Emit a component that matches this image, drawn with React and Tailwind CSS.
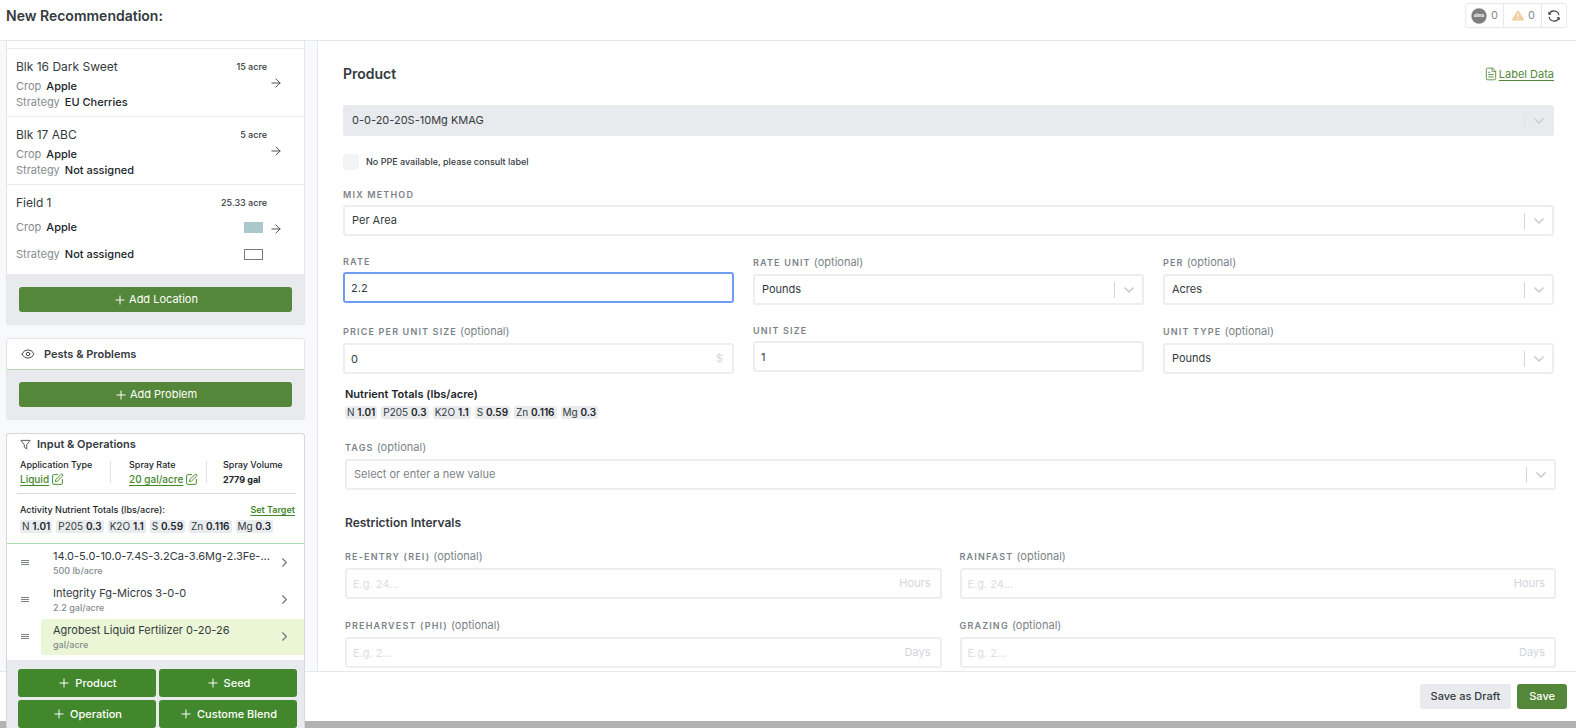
import { useState } from "react";
import { ArrowRight, ChevronDown, ChevronRight, Eye, FileText, Plus, SquarePen } from "lucide-react";

const locations = [
  { name: "Blk 16 Dark Sweet", size: "15 acre", crop: "Apple", strategy: "EU Cherries" },
  { name: "Blk 17 ABC", size: "5 acre", crop: "Apple", strategy: "Not assigned" },
  { name: "Field 1", size: "25.33 acre", crop: "Apple", strategy: "Not assigned", swatches: true },
];

const nutrients = [
  ["N", "1.01"],
  ["P205", "0.3"],
  ["K2O", "1.1"],
  ["S", "0.59"],
  ["Zn", "0.116"],
  ["Mg", "0.3"],
];

const inputs = [
  { name: "14.0-5.0-10.0-7.4S-3.2Ca-3.6Mg-2.3Fe-...", rate: "500 lb/acre" },
  { name: "Integrity Fg-Micros 3-0-0", rate: "2.2 gal/acre" },
  { name: "Agrobest Liquid Fertilizer 0-20-26", rate: "gal/acre", active: true },
];

function SyncIcon() {
  return (
    <svg viewBox="0 0 12 12" className="size-3" fill="none" stroke="#343a40" strokeWidth="1.1" aria-hidden="true">
      <path d="M1.4 3.8A5 5 0 0 1 10.900 5.200" />
      <path d="M10.600 8.200A5 5 0 0 1 1.100 6.800" />
      <path d="M.3 1.500v3.200h3.200z" fill="#343a40" stroke="none" />
      <path d="M11.700 10.500V7.300H8.500z" fill="#343a40" stroke="none" />
    </svg>
  );
}

function WarningIcon() {
  return (
    <svg viewBox="0 0 12 11" className="h-[11px] w-3" aria-hidden="true">
      <path
        d="M6 .4c.4 0 .7.2.9.5l4.800 8.200c.4.7-.1 1.500-.9 1.500H1.200C.4 10.600-.1 9.800.3 9.100L5.100.9C5.300.6 5.600.4 6 .4z"
        fill="#f3cda0"
      />
      <path d="M6 3.600v3.200" stroke="#fff" strokeWidth="1.200" />
      <circle cx="6" cy="8.500" r=".8" fill="#fff" />
    </svg>
  );
}

function FunnelIcon() {
  return (
    <svg viewBox="0 0 12 12" className="size-[11px]" fill="none" stroke="#495057" strokeLinejoin="round" aria-hidden="true">
      <path d="M1 1.500h10L7.300 6.200v4.600L4.700 9V6.200z" />
    </svg>
  );
}

function GripIcon() {
  return (
    <svg viewBox="0 0 10 10" className="size-[10px]" stroke="#7c8388" strokeWidth="1" aria-hidden="true">
      <path d="M1 2.500h8M1 4.500h8M1 6.500h8" />
    </svg>
  );
}

function Chips() {
  return (
    <ul className="flex gap-1 text-[10px] leading-[13px] text-[#343a40]">
      {nutrients.map(([symbol, amount]) => (
        <li key={symbol} className="rounded-xs bg-[#e9ecef] px-[2px] whitespace-nowrap">
          {symbol} <b className="font-semibold text-[#212529]">{amount}</b>
        </li>
      ))}
    </ul>
  );
}

function GreenButton({ children, className }) {
  return (
    <button
      type="button"
      className={`flex items-center justify-center rounded-[3px] text-[11px] text-white ${className}`}
    >
      <Plus className="size-[14px]" strokeWidth={1.700} />
      {children}
    </button>
  );
}

function Field({ id, label, optional, children }) {
  return (
    <div>
      <label
        htmlFor={id}
        className={`mb-[3px] block text-[9px] font-semibold tracking-[0.13em] text-[#7c8388] uppercase ${optional ? "leading-4" : "leading-[14px]"}`}
      >
        {label}
        {optional && (
          <span className="text-[11px] leading-3 font-normal tracking-normal normal-case"> (optional)</span>
        )}
      </label>
      {children}
    </div>
  );
}

function Select({ id, value, disabled, muted, ariaLabel }) {
  return (
    <div className="relative">
      <select
        id={id}
        disabled={disabled}
        aria-label={ariaLabel}
        className={`block h-[31px] w-full appearance-none rounded-[3px] border-2 pr-11 pl-[7px] text-[11px] opacity-100 outline-none ${disabled ? "border-[#e9eaee] bg-[#e9eaee]" : "border-[#eeeef1] bg-white"} ${muted ? "text-[#7c8388]" : "text-[#343a40]"}`}
      >
        <option>{value}</option>
      </select>
      <div className="pointer-events-none absolute inset-y-0 right-0 flex items-center">
        <span className={`h-4 w-px ${disabled ? "bg-[#e1e2e6]" : "bg-[#d3d4d8]"}`} />
        <ChevronDown className="mr-[7px] ml-[6px] size-4 text-[#cccccc]" strokeWidth={2.500} />
      </div>
    </div>
  );
}

function TextInput({ id, value, placeholder, unit, active }) {
  const [text, setText] = useState(value ?? "");
  return (
    <div className="relative">
      <input
        id={id}
        value={text}
        placeholder={placeholder}
        onChange={(event) => setText(event.target.value)}
        className={`block h-[31px] w-full rounded-[3px] border-2 bg-white px-[6px] text-[11px] text-[#343a40] outline-none placeholder:text-[#dcdde3] ${active ? "border-[#6f9df1]" : "border-[#eeeef1]"}`}
      />
      {unit && (
        <span className="pointer-events-none absolute inset-y-0 right-[11px] flex items-center text-[11px] text-[#d3d5dd]">
          {unit}
        </span>
      )}
    </div>
  );
}

function LocationRow({ name, size, crop, strategy, swatches }) {
  return (
    <li className="flex border-t border-[#e9eaee] pt-[10px] pr-[21px] pb-[6px] pl-[9px] text-[11px]">
      <div className="grow">
        <h3 className="text-[12px] leading-4 text-[#343a40]">{name}</h3>
        <dl className={`mt-[3px] ${swatches ? "leading-[27px]" : "leading-4"}`}>
          <div className="flex gap-[5px]">
            <dt className="text-[#868b90]">Crop</dt>
            <dd className="font-medium text-[#212529]">{crop}</dd>
          </div>
          <div className="flex gap-[5px]">
            <dt className="text-[#868b90]">Strategy</dt>
            <dd className="font-medium text-[#212529]">{strategy}</dd>
          </div>
        </dl>
      </div>
      <div className="flex flex-col items-end text-[9px] font-medium">
        <span className="leading-4 text-[#343a40]">{size}</span>
        {swatches && (
          <div className="mt-[11px] mr-1 flex flex-col gap-4">
            <span className="h-[11px] w-[19px] bg-[#a9c8ca]" />
            <span className="h-[11px] w-[19px] border border-[#777b80]" />
          </div>
        )}
      </div>
      <button
        type="button"
        aria-label={`Open ${name}`}
        className={`ml-[2px] flex self-start ${swatches ? "mt-[27px]" : "mt-[17px]"}`}
      >
        <ArrowRight className="size-[14px] text-[#495057]" strokeWidth={1.700} />
      </button>
    </li>
  );
}

function EditLink({ href, children }) {
  return (
    <a href={href} className="flex items-center gap-[2px] text-[10px] font-medium text-[#43872c]">
      <span className="underline underline-offset-2">{children}</span>
      <SquarePen className="size-[13px]" strokeWidth={1.800} />
    </a>
  );
}

function Sidebar() {
  return (
    <aside className="z-10 flex w-[318px] shrink-0 flex-col border-r border-[#e7e8eb] bg-[#f8f9fb] pr-3 pl-[6px]">
      <section className="shrink-0 rounded-b-[3px] border border-t-0 border-[#e5e6ea] bg-white pt-[7px]">
        <ul>
          {locations.map((location) => (
            <LocationRow key={location.name} {...location} />
          ))}
        </ul>
        <div className="bg-[#e9eaee] px-3 pt-[13px] pb-3">
          <GreenButton className="h-[25px] w-full gap-[2px] bg-[#54873a]">Add Location</GreenButton>
        </div>
      </section>

      <section className="mt-[13px] shrink-0 rounded-[3px] border border-[#e5e6ea] bg-white">
        <h2 className="flex h-[31px] items-center gap-[9px] border-b border-[#b5d8b0] pl-[14px] text-[11px] font-semibold text-[#343a40]">
          <Eye className="size-[14px]" strokeWidth={1.600} />
          Pests &amp; Problems
        </h2>
        <div className="bg-[#e9eaee] p-3">
          <GreenButton className="h-[25px] w-full gap-[2px] bg-[#54873a]">Add Problem</GreenButton>
        </div>
      </section>

      <section className="mt-[13px] shrink-0 rounded-t-[3px] border border-b-0 border-[#d5d8dc] bg-white">
        <h2 className="flex items-center gap-[6px] pt-[2px] pl-[13px] text-[11px] leading-4 font-semibold text-[#343a40]">
          <FunnelIcon />
          Input &amp; Operations
        </h2>
        <div className="mr-2 ml-[10px] flex border-b border-[#d5d8dc] pt-[5px] pb-[6px] pl-[3px] text-[9px] leading-[15px] font-medium text-[#212529]">
          <div className="w-[90px]">
            <div>Application Type</div>
            <EditLink href="#application-type">Liquid</EditLink>
          </div>
          <span className="my-1 mr-[18px] w-px bg-[#dee2e6]" />
          <div className="w-[77px]">
            <div>Spray Rate</div>
            <EditLink href="#spray-rate">20 gal/acre</EditLink>
          </div>
          <span className="my-1 mr-4 w-px bg-[#dee2e6]" />
          <div>
            <div>Spray Volume</div>
            <div className="font-bold">2779 gal</div>
          </div>
        </div>
        <div className="flex justify-between pt-2 pr-[9px] pl-[13px] text-[9px] leading-4 font-medium text-[#212529]">
          <span>Activity Nutrient Totals (lbs/acre):</span>
          <a href="#set-target" className="font-semibold text-[#43872c] underline underline-offset-2">
            Set Target
          </a>
        </div>
        <div className="border-b border-[#a9dcaa] pt-[2px] pb-[10px] pl-[13px]">
          <Chips />
        </div>
        <ul className="pb-[5px]">
          {inputs.map(({ name, rate, active }) => (
            <li key={name} className="flex h-[37px] items-center pl-[13px]">
              <button type="button" aria-label={`Reorder ${name}`}>
                <GripIcon />
              </button>
              <a
                href="#input"
                className={`ml-[11px] flex h-9 min-w-0 grow items-center justify-between rounded-l-[3px] px-3 ${active ? "bg-[#eaf6d5]" : ""}`}
              >
                <span className="flex flex-col whitespace-nowrap">
                  <span className="text-[11px] leading-4 text-[#343a40]">{name}</span>
                  <span className="text-[9px] leading-[14px] font-medium text-[#868b90]">{rate}</span>
                </span>
                <ChevronRight className="size-[15px] shrink-0 text-[#6c757d]" strokeWidth={1.800} />
              </a>
            </li>
          ))}
        </ul>
        <div className="grid grid-cols-2 gap-[3px] bg-[#e9eaee] pt-[9px] pr-[7px] pl-[11px]">
          {["Product", "Seed", "Operation", "Custome Blend"].map((kind) => (
            <GreenButton key={kind} className="h-7 gap-1 bg-[#43872c] font-medium">
              {kind}
            </GreenButton>
          ))}
        </div>
      </section>
    </aside>
  );
}

function ProductForm() {
  return (
    <main className="min-w-0 grow overflow-hidden bg-white pr-5 pl-[25px]">
      <div className="pr-[2px]">
        <div className="flex items-center justify-between pt-[23px]">
          <h2 className="text-[14px] leading-5 font-semibold text-[#343a40]">Product</h2>
          <a href="#label-data" className="flex items-center gap-px text-[11px] text-[#54873a]">
            <FileText className="size-[14px]" strokeWidth={1.500} />
            <span className="underline underline-offset-2">Label Data</span>
          </a>
        </div>
        <div className="mt-[21px]">
          <Select id="product" value="0-0-20-20S-10Mg KMAG" disabled ariaLabel="Product" />
        </div>
        <label className="mt-[18px] flex items-center gap-[7px] text-[9px] leading-4 font-medium text-[#343a40]">
          <input type="checkbox" disabled className="size-4 appearance-none rounded-[3px] bg-[#f3f4f6]" />
          No PPE available, please consult label
        </label>
        <div className="mt-[18px]">
          <Field id="mix-method" label="Mix method">
            <Select id="mix-method" value="Per Area" />
          </Field>
        </div>
        <div className="mt-[19px] grid grid-cols-3 gap-x-[19px] gap-y-[19px]">
          <Field id="rate" label="Rate">
            <TextInput id="rate" value="2.2" active />
          </Field>
          <Field id="rate-unit" label="Rate unit" optional>
            <Select id="rate-unit" value="Pounds" />
          </Field>
          <Field id="per" label="Per" optional>
            <Select id="per" value="Acres" />
          </Field>
          <Field id="price" label="Price per unit size" optional>
            <TextInput id="price" value="0" unit="$" />
          </Field>
          <Field id="unit-size" label="Unit size">
            <TextInput id="unit-size" value="1" />
          </Field>
          <Field id="unit-type" label="Unit type" optional>
            <Select id="unit-type" value="Pounds" />
          </Field>
        </div>
      </div>

      <div className="pl-[2px]">
        <h3 className="mt-3 text-[11px] leading-4 font-semibold text-[#212529]">Nutrient Totals (lbs/acre)</h3>
        <div className="mt-1 mb-[21px]">
          <Chips />
        </div>
        <Field id="tags" label="Tags" optional>
          <Select id="tags" value="Select or enter a new value" muted />
        </Field>
        <h3 className="mt-[23px] text-[12px] leading-5 font-semibold text-[#343a40]">Restriction Intervals</h3>
        <div className="mt-4 grid grid-cols-2 gap-x-[18px] gap-y-[19px]">
          <Field id="reentry" label="Re-entry (REI)" optional>
            <TextInput id="reentry" placeholder="E.g. 24..." unit="Hours" />
          </Field>
          <Field id="rainfast" label="Rainfast" optional>
            <TextInput id="rainfast" placeholder="E.g. 24..." unit="Hours" />
          </Field>
          <Field id="preharvest" label="Preharvest (PHI)" optional>
            <TextInput id="preharvest" placeholder="E.g. 2..." unit="Days" />
          </Field>
          <Field id="grazing" label="Grazing" optional>
            <TextInput id="grazing" placeholder="E.g. 2..." unit="Days" />
          </Field>
        </div>
      </div>
    </main>
  );
}

export default function App() {
  return (
    <div className="flex h-screen flex-col overflow-hidden bg-white font-['Inter',sans-serif]">
      <header className="flex h-[41px] shrink-0 items-start justify-between border-b border-[#e7e8eb] pr-[9px] pl-[6px]">
        <h1 className="pt-1 text-[14px] leading-6 font-semibold text-[#343a40]">New Recommendation:</h1>
        <div className="mt-[3px] flex h-[25px] divide-x divide-[#e7e8eb] rounded-[3px] border border-[#e7e8eb] text-[11px] text-[#868b90]">
          <button type="button" className="flex items-center gap-1 px-[5px]">
            <svg viewBox="0 0 16 16" className="size-4" aria-hidden="true">
              <circle cx="8" cy="8" r="7.700" fill="#7f7f7f" />
              <text x="8" y="9.300" textAnchor="middle" fontSize="4.200" fontWeight="700" fill="#fff">
                alma
              </text>
            </svg>
            0
          </button>
          <button type="button" className="flex items-center gap-1 pr-[6px] pl-2">
            <WarningIcon />
            0
          </button>
          <button type="button" aria-label="Sync" className="px-[6px]">
            <SyncIcon />
          </button>
        </div>
      </header>
      <div className="flex min-h-0 grow">
        <Sidebar />
        <ProductForm />
      </div>
      <footer className="flex h-[50px] shrink-0 items-center justify-end gap-[6px] border-t border-[#e7e8eb] bg-white pr-[9px] text-[11px] font-medium">
        <button type="button" className="h-[25px] rounded-[3px] bg-[#e9eaee] px-[11px] text-[#343a40]">
          Save as Draft
        </button>
        <button type="button" className="h-[25px] rounded-[3px] bg-[#54873a] px-3 text-white">
          Save
        </button>
      </footer>
      <div className="h-[7px] shrink-0 bg-[#b3b3b3]" />
    </div>
  );
}
